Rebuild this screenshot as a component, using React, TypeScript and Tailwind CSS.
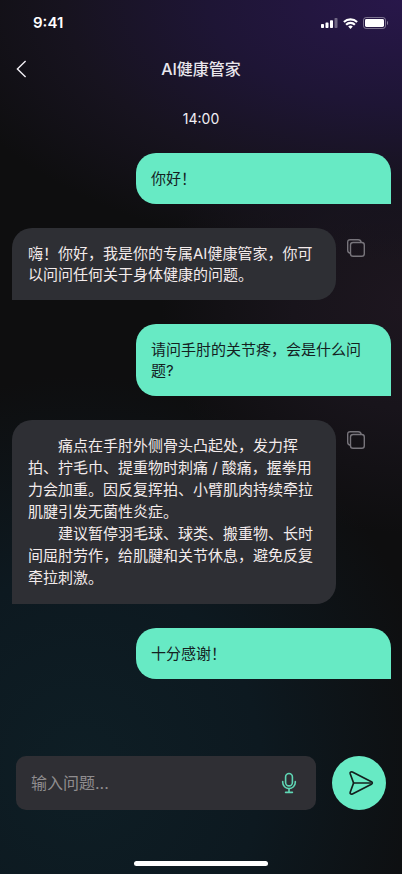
type Message = {
    from: "user" | "bot";
    paragraphs: string[];
    long?: boolean;
};

const messages: Message[] = [
    { from: "user", paragraphs: ["你好！"] },
    { from: "bot", paragraphs: ["嗨！你好，我是你的专属AI健康管家，你可以问问任何关于身体健康的问题。"] },
    { from: "user", paragraphs: ["请问手肘的关节疼，会是什么问题?"] },
    {
        from: "bot",
        long: true,
        paragraphs: [
            "痛点在手肘外侧骨头凸起处，发力挥拍、拧毛巾、提重物时刺痛 / 酸痛，握拳用力会加重。因反复挥拍、小臂肌肉持续牵拉肌腱引发无菌性炎症。",
            "建议暂停羽毛球、球类、搬重物、长时间屈肘劳作，给肌腱和关节休息，避免反复牵拉刺激。",
        ],
    },
    { from: "user", paragraphs: ["十分感谢！"] },
];

function StatusBar() {
    return (
        <div className="flex h-11 items-center justify-between pt-0.5 pr-[14px] pl-[33px]">
            <span className="text-[15px] leading-5 font-semibold text-white">9:41</span>
            <div className="flex items-center gap-[5px] text-white">
                <svg width="17" height="10" viewBox="0 0 17 10" fill="currentColor">
                    <rect x="0" y="6" width="3" height="4" rx="0.7" />
                    <rect x="4.5" y="4.4" width="3" height="5.6" rx="0.7" />
                    <rect x="9" y="2.2" width="3" height="7.8" rx="0.7" />
                    <rect x="13.5" y="0" width="3" height="10" rx="0.7" opacity="0.35" />
                </svg>
                <svg width="15" height="11" viewBox="0 0 15 11" fill="none" stroke="currentColor" strokeWidth="2.1">
                    <path d="M0.9 4.1a9.4 9.4 0 0 1 13.2 0" />
                    <path d="M3.1 6.7a6.2 6.2 0 0 1 8.800 0" />
                    <path d="M5.2 8.6a3.3 3.3 0 0 1 4.6 0L7.5 10.9z" fill="currentColor" stroke="none" />
                </svg>
                <svg width="25" height="12" viewBox="0 0 25 12" fill="none">
                    <rect x="0.5" y="0.5" width="22" height="11" rx="2.6" stroke="currentColor" opacity="0.4" />
                    <rect x="2" y="2" width="19" height="8" rx="1.4" fill="currentColor" />
                    <path d="M24 4v4c.8-.3 1-1.1 1-2s-.2-1.7-1-2z" fill="currentColor" opacity="0.45" />
                </svg>
            </div>
        </div>
    );
}

function CopyIcon() {
    return (
        <svg width="18" height="18" viewBox="0 0 18 18" fill="none" stroke="currentColor" strokeWidth="1.4" strokeLinejoin="round" strokeLinecap="round">
            <rect x="3.5" y="3.5" width="13.8" height="13.8" rx="2.6" />
            <path d="M3.4 14.2C1.7 13.9 0.7 12.8 0.7 11.2V3.2C0.7 1.6 1.6 0.7 3.2 0.7H11.2C12.8 0.7 13.9 1.7 14.2 3.4" />
        </svg>
    );
}

function Bubble({ message }: { message: Message }) {
    if (message.from === "user") {
        return (
            <li className="ml-auto w-[255px] rounded-t-[20px] rounded-bl-[20px] bg-[#67eac4] p-[15px] text-[15px] leading-[21px] text-[#14211f]">
                {message.paragraphs.map((text) => (
                    <p key={text}>{text}</p>
                ))}
            </li>
        );
    }

    return (
        <li className="flex items-start gap-[11px]">
            <div className="w-[324px] rounded-t-[20px] rounded-br-[20px] bg-[#2e2f34] px-4 py-[15px] text-[15px] text-[#f3ebeb]">
                {message.paragraphs.map((text) => (
                    <p key={text} className={message.long ? "indent-[30px] leading-[22px]" : "leading-[21px]"}>
                        {text}
                    </p>
                ))}
            </div>
            <button type="button" aria-label="复制" className="mt-[11px] text-[#77747b]">
                <CopyIcon />
            </button>
        </li>
    );
}

export default function App() {
    return (
        <div className="flex min-h-screen flex-col bg-[#0e0e0f] bg-[radial-gradient(ellipse_120%_30%_at_100%_0%,#28174a_0%,#1e1535_40%,#17131f_70%,transparent_100%),radial-gradient(ellipse_60%_26%_at_100%_35%,#1d161f_0%,#18141b_45%,transparent_100%),radial-gradient(ellipse_90%_45%_at_20%_88%,#0e1e25_0%,#0d1920_50%,transparent_100%)] font-[Inter,'Noto_Sans_CJK_SC',sans-serif]">
            <StatusBar />

            <header className="grid h-[50px] grid-cols-[40px_1fr_40px] items-center">
                <button type="button" aria-label="返回" className="pl-4 text-[#f1eef4]">
                    <svg width="11" height="18" viewBox="0 0 11 18" fill="none" stroke="currentColor" strokeWidth="1.4">
                        <path d="M9.6 1L1.4 9L9.6 17" />
                    </svg>
                </button>
                <h1 className="text-center text-base leading-6 font-medium text-[#e9e6ec]">AI健康管家</h1>
            </header>

            <main className="flex flex-1 flex-col pt-4">
                <time className="text-center text-sm leading-[18px] text-[#f1eef4]">14:00</time>
                <ul className="mt-[25px] flex flex-col gap-6 pr-[11px] pl-3">
                    {messages.map((message, i) => (
                        <Bubble key={i} message={message} />
                    ))}
                </ul>
            </main>

            <footer className="px-4 pt-6 pb-2">
                <form className="flex items-center gap-4" onSubmit={(e) => e.preventDefault()}>
                    <div className="flex h-[54px] min-w-0 flex-1 items-center rounded-[10px] bg-[#2f2f34] pr-[19px] pl-[15px]">
                        <input
                            type="text"
                            aria-label="输入问题"
                            placeholder="输入问题..."
                            className="min-w-0 flex-1 bg-transparent text-base leading-6 text-white outline-none placeholder:text-[#8f8d8f]"
                        />
                        <button type="button" aria-label="语音输入" className="text-[#5fd6b4]">
                            <svg width="16" height="22" viewBox="0 0 16 22" fill="none" stroke="currentColor" strokeWidth="1.6" strokeLinecap="round">
                                <rect x="4.6" y="1.5" width="6.8" height="12.4" rx="3.4" />
                                <path d="M1.7 9.5V10.3a6.3 6.3 0 0 0 12.6 0V9.5" />
                                <path d="M8 16.8v3.6M4.6 20.4h6.8" />
                            </svg>
                        </button>
                    </div>
                    <button type="submit" aria-label="发送" className="flex size-[54px] items-center justify-center rounded-full bg-[#67eac4] pl-1 text-[#14201e]">
                        <svg width="26" height="26" viewBox="0 0 26 26" fill="none" stroke="currentColor" strokeWidth="1.7" strokeLinejoin="round" strokeLinecap="round">
                            <path d="M4.4 2.1L23.4 11.8C24.6 12.500 24.6 13.500 23.400 14.200L4.400 23.900C2.900 24.600 1.700 23.700 2.200 22.200L5.600 13L2.200 3.800C1.700 2.300 2.900 1.400 4.400 2.100Z" />
                            <path d="M5.6 13H22.5" />
                        </svg>
                    </button>
                </form>
                <div className="mx-auto mt-[51px] h-[5px] w-[134px] rounded-full bg-white" />
            </footer>
        </div>
    );
}
